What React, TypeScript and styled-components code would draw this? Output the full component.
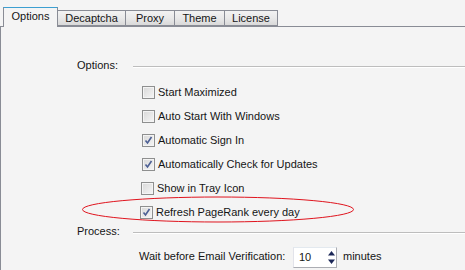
import React from 'react';
import styled, { createGlobalStyle } from 'styled-components';

const GlobalStyle = createGlobalStyle`
  html, body {
    margin: 0;
    padding: 0;
    background: #f4f4f4;
  }
  body {
    font-family: "Liberation Sans", Arial, sans-serif;
    font-size: 11px;
    color: #151515;
  }
`;

const Window = styled.div`
  position: relative;
  width: 465px;
  height: 270px;
  overflow: hidden;
  background: #f4f4f4;
`;

const TabStrip = styled.div`
  display: flex;
  align-items: flex-end;
  height: 26px;
  padding-left: 3px;
  box-sizing: border-box;
`;

const Tab = styled.div<{ $active?: boolean; $width: number }>`
  box-sizing: border-box;
  width: ${p => p.$width}px;
  height: ${p => (p.$active ? 20 : 16)}px;
  margin-left: ${p => (p.$active ? 0 : -1)}px;
  margin-bottom: ${p => (p.$active ? -1 : 0)}px;
  display: flex;
  align-items: center;
  justify-content: center;
  padding-bottom: ${p => (p.$active ? 3 : 0)}px;
  border: 1px solid #898c95;
  border-bottom: ${p => (p.$active ? 'none' : '1px solid #898c95')};
  border-top-color: ${p => (p.$active ? '#3c9fd1' : '#898c95')};
  background: ${p => (p.$active ? '#f4f4f4' : 'linear-gradient(#f2f2f2, #e9e9e9 50%, #d9d9d9)')};
  position: relative;
  z-index: ${p => (p.$active ? 2 : 1)};
  &:first-child {
    margin-left: 0;
  }
`;

const Panel = styled.div`
  height: 244px;
  border-top: 1px solid #898c95;
  border-left: 1px solid #898c95;
  box-sizing: border-box;
  padding-top: 30px;
`;

const SectionHeader = styled.div`
  display: flex;
  align-items: center;
  height: 16px;
  padding-left: 76px;
`;

const SectionLabel = styled.span`
  width: 56px;
  flex: none;
`;

const SectionRule = styled.div`
  flex: 1;
  height: 1px;
  margin-top: 2px;
  background: #bdbdbd;
  box-shadow: 0 1px 0 #ffffff;
`;

const CheckList = styled.div`
  display: flex;
  flex-direction: column;
  padding: 7px 0 0 141px;
  margin-bottom: -1px;
`;

const CheckRow = styled.label<{ $shift?: number }>`
  display: flex;
  align-items: center;
  height: 24px;
  gap: 3px;
  margin-left: ${p => -(p.$shift || 0)}px;
`;

const Box = styled.span`
  box-sizing: border-box;
  width: 13px;
  height: 13px;
  border: 1px solid #8e8f8f;
  display: flex;
  align-items: center;
  justify-content: center;
  background: linear-gradient(135deg, #d8d8d8, #f6f6f6);
  box-shadow: inset 0 0 0 1px #f4f4f4;
`;

const FieldRow = styled.div`
  display: flex;
  align-items: center;
  height: 24px;
  margin-top: 5px;
  padding-left: 138px;
`;

const FieldLabel = styled.span`
  width: 154px;
`;

const Spinner = styled.div`
  box-sizing: border-box;
  width: 44px;
  height: 21px;
  display: flex;
  align-items: center;
  border: 1px solid #abadb3;
  border-top-color: #e3e9ef;
  border-left-color: #e2e3ea;
  background: #ffffff;
  padding-left: 5px;
  margin-top: 2px;
`;

const SpinValue = styled.span`
  flex: 1;
`;

const Unit = styled.span`
  margin-left: 6px;
`;

const Ellipse = styled.svg`
  position: absolute;
  left: 81px;
  top: 196px;
`;

const Check = () => (
  <svg width="9" height="9" viewBox="0 0 9 9">
    <path d="M1.5 4.5 L3.5 7 L7.5 1" fill="none" stroke="#4c5f94" strokeWidth="1.6" />
  </svg>
);

const CheckItem = ({ label, checked, shift }: { label: string; checked?: boolean; shift?: number }) => (
  <CheckRow $shift={shift}>
    <Box>{checked && <Check />}</Box>
    <span>{label}</span>
  </CheckRow>
);

const tabs = [
  { label: 'Options', width: 55, active: true },
  { label: 'Decaptcha', width: 69 },
  { label: 'Proxy', width: 50 },
  { label: 'Theme', width: 51 },
  { label: 'License', width: 54 },
];

export default function App() {
  return (
    <Window>
      <GlobalStyle />
      <TabStrip>
        {tabs.map(t => (
          <Tab key={t.label} $active={t.active} $width={t.width}>
            {t.label}
          </Tab>
        ))}
      </TabStrip>
      <Panel>
        <SectionHeader>
          <SectionLabel>Options:</SectionLabel>
          <SectionRule />
        </SectionHeader>
        <CheckList>
          <CheckItem label="Start Maximized" />
          <CheckItem label="Auto Start With Windows" />
          <CheckItem label="Automatic Sign In" checked />
          <CheckItem label="Automatically Check for Updates" checked />
          <CheckItem label="Show in Tray Icon" shift={1} />
          <CheckItem label="Refresh PageRank every day" checked shift={2} />
        </CheckList>
        <SectionHeader>
          <SectionLabel>Process:</SectionLabel>
          <SectionRule />
        </SectionHeader>
        <FieldRow>
          <FieldLabel>Wait before Email Verification:</FieldLabel>
          <Spinner>
            <SpinValue>10</SpinValue>
            <svg width="9" height="15" viewBox="0 0 9 15">
              <path d="M4.5 1 L8 5.5 L1 5.5 Z" fill="#1b2757" />
              <path d="M4.5 14 L8 9.5 L1 9.5 Z" fill="#1b2757" />
            </svg>
          </Spinner>
          <Unit>minutes</Unit>
        </FieldRow>
      </Panel>
      <Ellipse width="274" height="28" viewBox="0 0 274 28">
        <ellipse cx="137" cy="13.5" rx="135.5" ry="12.5" fill="none" stroke="#e0141e" strokeWidth="1" />
      </Ellipse>
    </Window>
  );
}
